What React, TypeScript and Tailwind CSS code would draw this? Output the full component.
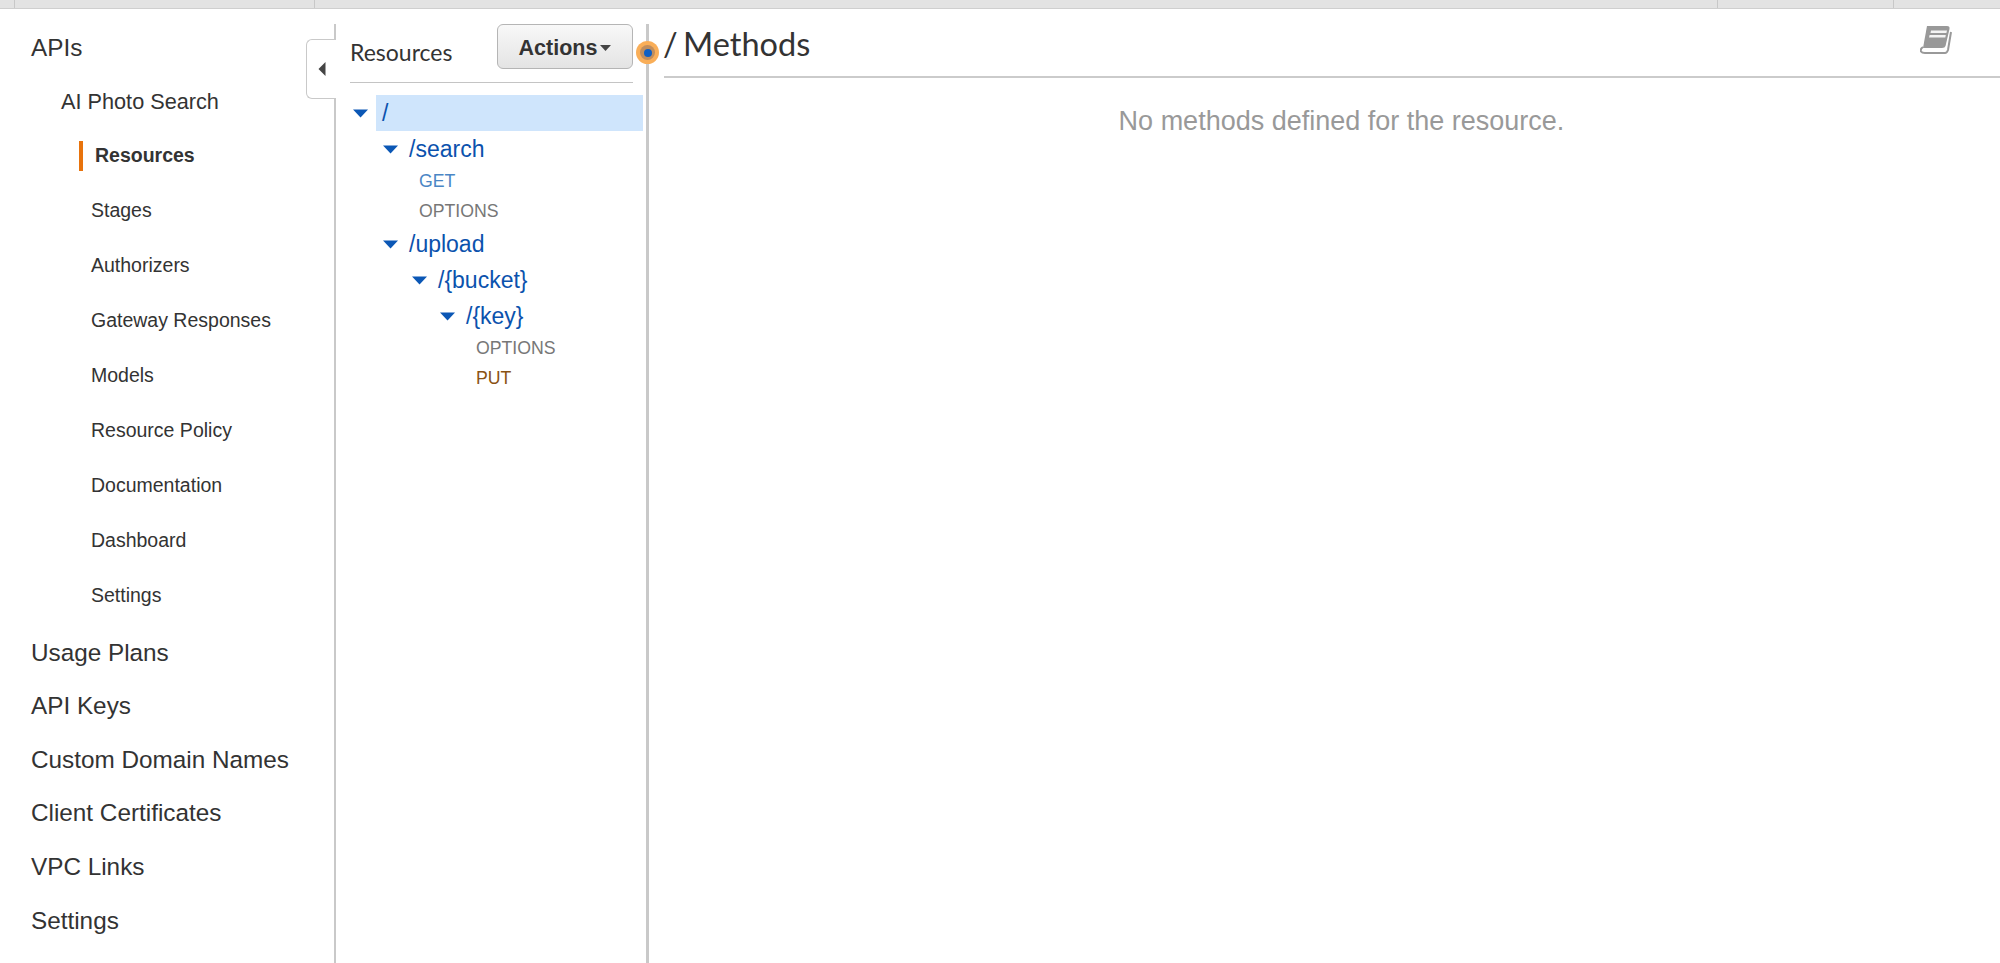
const subNav = ["Stages", "Authorizers", "Gateway Responses", "Models", "Resource Policy", "Documentation", "Dashboard", "Settings"];
const mainNav = ["Usage Plans", "API Keys", "Custom Domain Names", "Client Certificates", "VPC Links", "Settings"];

const Caret = () => (
  <svg width="15" height="9" viewBox="0 0 15 9" className="shrink-0">
    <path d="M0 0.5H15L7.5 8.5Z" fill="#0b57b5" />
  </svg>
);

const TreeRow = ({ label, indent }: { label: string; indent: string }) => (
  <div className={`flex items-center h-9 ${indent}`}>
    <Caret />
    <span className="ml-[11px] text-[23px] text-[#0b52ad]">{label}</span>
  </div>
);

const Method = ({ label, color, indent }: { label: string; color: string; indent: string }) => (
  <div className={`flex items-center h-[29.5px] text-[17.7px] ${indent} ${color}`}>{label}</div>
);

export default function App() {
  return (
    <div className="h-[963px] flex flex-col overflow-hidden bg-white font-['Liberation_Sans',Arial,sans-serif]">
      {/* browser tab strip */}
      <div className="h-[9px] shrink-0 flex bg-[#e3e3e3] border-b border-[#cfcfcf]">
        <div className="w-[15px] border-r border-[#c8c8c8]" />
        <div className="w-[300px] border-r border-[#c8c8c8]" />
        <div className="w-[1403px] border-r border-[#c8c8c8]" />
        <div className="w-[176px] border-r border-[#c8c8c8]" />
      </div>

      <div className="flex-1 flex min-h-0">
        {/* left nav */}
        <aside className="w-[334px] shrink-0 pt-[12px] text-[#333]">
          <div className="h-[55px] pl-[31px] flex items-center text-[24.3px]">APIs</div>
          <div className="h-[53px] pl-[61px] flex items-center text-[21.7px]">AI Photo Search</div>
          <div className="h-[54px] pl-[79px] flex items-center">
            <div className="w-1 h-[30px] bg-[#e8730c]" />
            <span className="ml-3 text-[19.5px] font-bold">Resources</span>
          </div>
          {subNav.map((item) => (
            <div key={item} className="h-[55px] pl-[91px] flex items-center text-[19.5px]">
              {item}
            </div>
          ))}
          <div className="mt-[3px]">
            {mainNav.map((item) => (
              <div key={item} className="h-[53.6px] pl-[31px] flex items-center text-[24.3px]">
                {item}
              </div>
            ))}
          </div>
        </aside>

        {/* resources tree */}
        <section className="relative w-[315px] shrink-0 mt-[15px] border-l-2 border-r-[3px] border-l-[#c9c9c9] border-r-[#c9c9c9] pl-[14px] pr-[13px]">
          {/* collapse tab */}
          <div className="absolute left-[-30px] top-[15px] w-[30px] h-[60px] bg-white border border-r-0 border-[#c9c9c9] rounded-l-[6px] flex items-center justify-center">
            <svg width="8" height="14" viewBox="0 0 8 14">
              <path d="M7.5 0V14L0.5 7Z" fill="#444" />
            </svg>
          </div>
          {/* focus dot */}
          <div className="absolute right-[-13px] top-[17px] w-[23px] h-[23px] rounded-full bg-[#f9ae58] flex items-center justify-center">
            <div className="w-[15px] h-[15px] rounded-full bg-[#c08d5c] flex items-center justify-center">
              <div className="w-2 h-2 rounded-full bg-[#0d5fc4]" />
            </div>
          </div>

          <div className="h-[59px] flex items-start justify-between border-b border-[#c4c4c4]">
            <span className="mt-[11px] text-[23px] text-[#333] font-['Lato',sans-serif]">Resources</span>
            <button className="w-[136px] h-[45px] pt-[3px] rounded-[6px] border border-[#b5b5b5] bg-gradient-to-b from-[#f8f8f8] to-[#e4e4e4] flex items-center justify-center text-[21.5px] font-bold text-[#333]">
              Actions
              <svg width="11" height="6" viewBox="0 0 11 6" className="ml-[3px]">
                <path d="M0 0H11L5.5 6Z" fill="#444" />
              </svg>
            </button>
          </div>

          <div className="mt-[12px] -mr-[10px]">
            <div className="flex items-center h-9">
              <div className="w-[26px] pl-[3px] shrink-0"><Caret /></div>
              <div className="flex-1 h-9 flex items-center pl-[6px] bg-[#cfe5fc] text-[23px] text-[#0b52ad]">/</div>
            </div>
            <TreeRow label="/search" indent="pl-[33px]" />
            <Method label="GET" color="text-[#4a86c5]" indent="pl-[69px]" />
            <Method label="OPTIONS" color="text-[#777]" indent="pl-[69px]" />
            <TreeRow label="/upload" indent="pl-[33px]" />
            <TreeRow label="/{bucket}" indent="pl-[62px]" />
            <TreeRow label="/{key}" indent="pl-[90px]" />
            <Method label="OPTIONS" color="text-[#777]" indent="pl-[126px]" />
            <Method label="PUT" color="text-[#8a5212]" indent="pl-[126px]" />
          </div>
        </section>

        {/* methods panel */}
        <main className="flex-1 pl-[15px] min-w-0">
          <div className="h-[69px] flex items-center justify-between border-b-2 border-[#cbcbcb] font-['Lato',sans-serif]">
            <h1 className="text-[32.5px] text-[#333] mt-[4px] -ml-[1px] [word-spacing:-3px]">/ Methods</h1>
            <svg width="32" height="30" viewBox="0 0 32 30" className="mr-[48px] -mt-[6px]">
              <path d="M7 1H27Q30 1 29.5 4L25.5 21Q25 23 22 23H3Z" fill="#999" />
              <path d="M11 5.5H27L26.4 8H10.5ZM9.6 10H25.8L25.3 12.5H9Z" fill="#f4f4f4" />
              <path d="M3 22Q0 24 1 26.5Q2 28 5 28H25Q27 28 28 25L31 7" fill="none" stroke="#999" strokeWidth="2" />
            </svg>
          </div>
          <p className="mt-[23px] pl-[19px] text-center text-[27px] text-[#999] font-['Liberation_Sans',sans-serif]">
            No methods defined for the resource.
          </p>
        </main>
      </div>
    </div>
  );
}
